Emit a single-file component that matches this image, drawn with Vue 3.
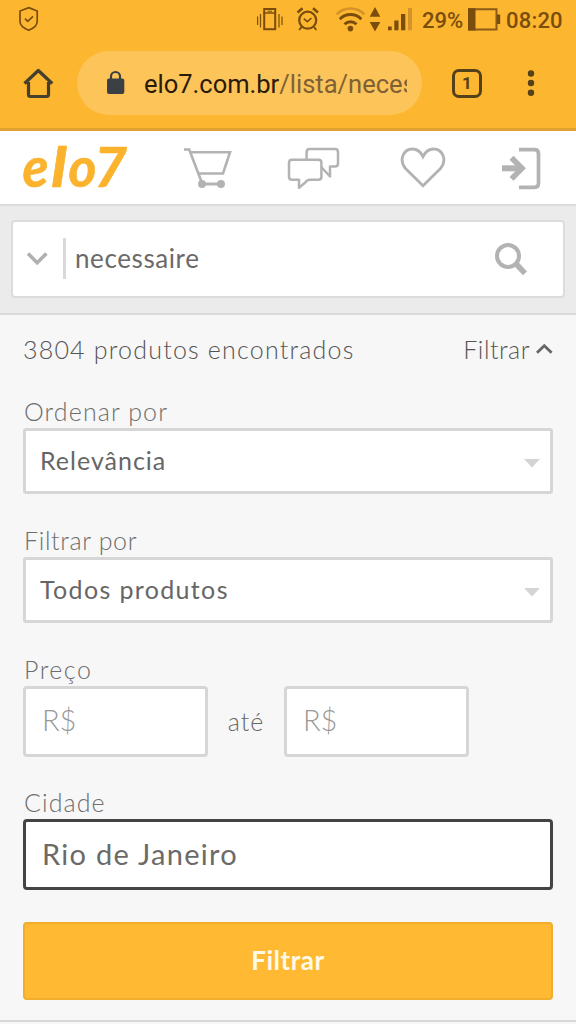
<script setup>
import { ref } from 'vue'

const query = ref('necessaire')
const city = ref('Rio de Janeiro')
const selects = [
  { label: 'Ordenar por', value: 'Relevância', cls: 'v-rel', lcls: 'l-ord' },
  { label: 'Filtrar por', value: 'Todos produtos', cls: 'v-tod', lcls: 'l-fil' },
]
</script>

<template>
  <div class="screen">
    <div class="status">
      <svg class="shield" width="22" height="28" viewBox="18 5 22 28" fill="none" stroke="#7a4d0c" stroke-width="1.7">
        <path d="M28.7 7.6L37.2 11v10.5c0 4-4 7-8.5 8.8c-4.500-1.800-8.700-4.800-8.700-8.800V11z" />
        <path d="M25 18.600l2.700 2.700l5.300-5" />
      </svg>
      <svg class="vibrate" width="28" height="28" viewBox="256 6 28 28" fill="none" stroke="#7a4d0c">
        <rect x="264.200" y="9" width="11" height="20.200" stroke-width="2" />
        <path d="M263.500 13h12.500" stroke-width="1.500" />
        <path d="M267.500 11.200h4.500" stroke-width="1" />
        <path d="M260.500 14v13.500M279 14v13.500M257.600 16.500v8.500M282 16.500v8.500" stroke-width="1.200" />
      </svg>
      <svg class="alarm" width="26" height="28" viewBox="295 6 26 28" fill="none" stroke="#7a4d0c">
        <circle cx="307.700" cy="20.200" r="8.500" stroke-width="2.200" />
        <path d="M297.500 12.500l5-4.300M318 12.500l-5-4.300" stroke-width="2.600" />
        <path d="M301.500 27l-2.300 3M314 27l2.300 3" stroke-width="2" />
        <path d="M303.800 18.600l3.500 3l4.200-3.600" stroke-width="1.600" />
      </svg>
      <svg class="wifi" width="32" height="28" viewBox="335 6 32 28" fill="none">
        <path d="M336.500 14.500c7.500-8 20.500-8 28 0" stroke="#d4922a" stroke-width="2.500" />
        <g stroke="#7a4d0c" stroke-width="2.900">
          <path d="M339.800 19.200c6-6.200 15.500-6.200 21.500 0" />
          <path d="M344.500 24.300c3.500-3.500 8.500-3.500 12 0" />
        </g>
        <circle cx="350.400" cy="28.600" r="2.800" fill="#7a4d0c" />
      </svg>
      <svg class="traffic" width="12" height="28" viewBox="369 6 12 28" fill="#7a4d0c">
        <path d="M375 7l5.300 9.800h-10.600zM375 31.500l5.300-9.500h-10.600z" />
      </svg>
      <svg class="signal" width="26" height="28" viewBox="387 6 26 28" fill="#7a4d0c">
        <path d="M388 26.500h3.700v3.700H388zM394.300 20.500h4.200v9.700h-4.200zM401 14h4.300v16.200H401z" />
        <path d="M408 8h4v22.200h-4z" fill="#d4922a" />
      </svg>
      <span class="pct">29%</span>
      <svg class="battery" width="34" height="28" viewBox="467 6 34 28">
        <path d="M469 9.200h27.500v20.200H469z" fill="none" stroke="#8a5c17" stroke-width="2" />
        <path d="M468 8.200h7.500v22.200H468zM497 14.500h3.200v9.500H497z" fill="#7a4d0c" />
      </svg>
      <span class="clock">08:20</span>
    </div>

    <div class="browser">
      <svg class="home" width="32" height="34" viewBox="22 67 32 34" fill="none" stroke="#45402e" stroke-width="3.200" stroke-linejoin="round">
        <path d="M24.500 83.500L38.300 70.500L52.200 83.500M28.500 82v12.500q0 2 2 2h16q2 0 2-2V82" />
      </svg>
      <div class="url">
        <svg class="lock" width="20" height="26" viewBox="106 70 20 26">
          <path d="M111 80v-3.500a4.500 4.500 0 0 1 9 0V80" fill="none" stroke="#3b4044" stroke-width="2.200" />
          <rect x="107" y="78.600" width="17.300" height="15.400" rx="2" fill="#3b4044" />
        </svg>
        <div class="address"><b>elo7.com.br</b>/lista/neces</div>
      </div>
      <div class="tabs"><span>1</span></div>
      <svg class="dots" width="10" height="30" viewBox="526 68 10 30" fill="#54401a">
        <circle cx="531" cy="73.500" r="3.200" /><circle cx="531" cy="83" r="3.200" /><circle cx="531" cy="92.700" r="3.200" />
      </svg>
    </div>

    <header class="site">
      <svg class="logo" width="108" height="70" viewBox="21 133 108 70">
        <g class="logo-text">
          <text x="22.500" y="187" textLength="26" lengthAdjust="spacingAndGlyphs">e</text>
          <text x="51" y="187" textLength="16" lengthAdjust="spacingAndGlyphs">l</text>
          <text x="68.500" y="187" textLength="28" lengthAdjust="spacingAndGlyphs">o</text>
          <text x="94" y="187" textLength="33" lengthAdjust="spacingAndGlyphs">7</text>
        </g>
      </svg>
      <svg class="cart" width="50" height="44" viewBox="183 145 50 44" fill="none" stroke="#b3b3b3" stroke-width="2.600">
        <path d="M184 148.500h5.200L202 182M190.500 151.200h39.500l-7 21.300h-24" />
        <path d="M202 183h19" stroke-width="3" />
        <circle cx="202" cy="183" r="4" fill="#b3b3b3" stroke="none" /><circle cx="221" cy="183" r="4" fill="#b3b3b3" stroke="none" />
      </svg>
      <svg class="chat" width="54" height="44" viewBox="287 145 54 44" fill="none" stroke="#b3b3b3" stroke-width="2.500" stroke-linejoin="round">
        <path d="M306.600 158.500v-7.500q0-3 3-3h25.400q3 0 3 3v11.500q0 3-3 3h-5v10l-8.700-9.500" />
        <path d="M292 158.700h26.400q3 0 3 3v14q0 3-3 3h-8.400q-3 0-5 3l-6 5v-8h-7q-3 0-3-3v-14q0-3 3-3z" />
      </svg>
      <svg class="heart" width="48" height="44" viewBox="399 145 48 44" fill="none" stroke="#b3b3b3" stroke-width="2.800">
        <path d="M423 184.800L405.500 167.500C398.500 159 403.500 148 412.500 148C417.500 148 421 151.500 423 155.500C425 151.500 428.500 148 433.500 148C442.500 148 447.500 159 440.500 167.500z" />
      </svg>
      <svg class="login" width="42" height="44" viewBox="501 145 42 44" fill="none" stroke="#b3b3b3">
        <path d="M519 148.700h15.500q4 0 4 4v29.600q0 4-4 4H519" stroke-width="3.700" />
        <path d="M502 167.300h20" stroke-width="6" />
        <path d="M511.500 156.700l10.500 10.600l-10.500 10.600" stroke-width="5.600" />
      </svg>
    </header>

    <section class="search">
      <div class="searchbox">
        <svg class="chev" width="24" height="16" viewBox="25 251 24 16" fill="none" stroke="#b0b0b0" stroke-width="3.600">
          <path d="M28 253.500l9.200 9.200l9.200-9.200" />
        </svg>
        <i class="bar"></i>
        <span class="query">{{ query }}</span>
        <svg class="lens" width="36" height="36" viewBox="493 241 36 36" fill="none" stroke="#b3b3b3">
          <circle cx="508" cy="256" r="11" stroke-width="4" />
          <path d="M516.200 264l8.800 9.300" stroke-width="5.600" />
        </svg>
      </div>
    </section>

    <main>
      <div class="summary">
        <span class="count">3804 produtos encontrados</span>
        <span class="toggle"><span>Filtrar</span>
          <svg width="18" height="12" viewBox="536 343 18 12" fill="none" stroke="#666" stroke-width="2.800"><path d="M538 352.800l7.300-7l7.300 7" /></svg>
        </span>
      </div>

      <template v-for="s in selects" :key="s.label">
        <div class="label"><span :class="s.lcls">{{ s.label }}</span></div>
        <div class="select">
          <span :class="s.cls">{{ s.value }}</span>
          <svg width="16" height="9" viewBox="0 0 16 9"><path d="M0 0h16L8 8.500z" fill="#d4d4d4" /></svg>
        </div>
      </template>

      <div class="label"><span class="l-pre">Preço</span></div>
      <div class="prices">
        <div class="input price"><span class="ph">R$</span></div>
        <span class="ate">até</span>
        <div class="input price"><span class="ph">R$</span></div>
      </div>

      <div class="label l-city"><span>Cidade</span></div>
      <div class="input focus"><span class="city">{{ city }}</span></div>

      <button class="submit"><span>Filtrar</span></button>
    </main>
    <div class="foot"></div>
  </div>
</template>

<style>
html, body { margin: 0; background: #f7f7f7; overflow: hidden; }
</style>

<style scoped>
* { box-sizing: border-box; }
.screen { width: 576px; height: 1024px; overflow: hidden; background: #f7f7f7; font-family: Lato, "Noto Sans", sans-serif; color: #737373; display: flex; flex-direction: column; }
svg { display: block; flex: none; }
span { white-space: nowrap; }
.status { height: 40px; flex: none; background: #fcb62f; display: flex; align-items: center; font-family: Roboto, sans-serif; font-weight: 500; font-size: 22px; color: #7a4d0c; }
.shield { margin-left: 18px; margin-top: -2px; }
.vibrate { margin-left: 216px; }
.alarm { margin-left: 11px; }
.wifi { margin-left: 14px; }
.traffic { margin-left: 2px; }
.signal { margin-left: 6px; }
.pct { margin-left: 9px; width: 45px; }
.clock { margin-left: 5px; letter-spacing: .2px; }
.browser { height: 91px; flex: none; background: #fcb62f; border-bottom: 3px solid #e2a232; display: flex; align-items: center; }
.home { margin-left: 22px; }
.url { margin-left: 23px; margin-top: -2px; width: 345px; height: 64px; border-radius: 32px; background: #fdc45a; display: flex; align-items: center; }
.lock { margin-left: 29px; }
.address { margin-left: 18px; width: 263px; overflow: hidden; white-space: nowrap; font-family: Roboto, sans-serif; font-size: 25.5px; line-height: 36px; color: #806035; padding-top: 2px; }
.address b { font-weight: 400; color: #2a1a08; }
.tabs { margin-left: 30px; margin-top: -2px; width: 30px; height: 29px; border: 3px solid #54401a; border-radius: 7px; font: 700 17px/23px Roboto, sans-serif; color: #54401a; text-align: center; }
.dots { margin-left: 44px; margin-top: -2px; }
.site { height: 75px; flex: none; background: #fff; border-bottom: 2px solid #dcdcdc; display: flex; align-items: center; }
.logo { margin-left: 21px; overflow: visible; }
.logo-text { font-family: Lato, sans-serif; font-weight: 700; font-style: italic; font-size: 55px; fill: #fbb32e; stroke: #fbb32e; stroke-width: .6px; }
.cart { margin-left: 54px; }
.chat { margin-left: 54px; }
.heart { margin-left: 58px; }
.login { margin-left: 54px; }
.search { height: 109px; flex: none; background: #ebebeb; border-bottom: 2px solid #dadada; padding: 14px 11px 0; }
.searchbox { height: 78px; background: #fff; border: 2px solid #dcdcdc; border-radius: 4px; display: flex; align-items: center; }
.chev { margin-left: 12px; }
.bar { width: 3px; height: 41px; background: #d9d9d9; margin-left: 14px; margin-top: -1px; flex: none; }
.query { margin-left: 9px; width: 300px; font-size: 26px; line-height: 34px; margin-top: -3px; letter-spacing: .6px; color: #6c6a68; }
.lens { margin-left: 118px; }
main { flex: none; padding: 0 23px; display: flex; flex-direction: column; }
.summary { height: 79px; display: flex; justify-content: space-between; padding-top: 16px; font-size: 25px; font-weight: 300; line-height: 36px; color: #555; }
.count { letter-spacing: 1.2px; }
.toggle { display: flex; height: 36px; align-items: center; gap: 5px; letter-spacing: .5px; }
.label { height: 34px; line-height: 34px; font-size: 25px; font-weight: 300; color: #6e6e6e; flex: none; letter-spacing: 1.1px; padding-left: 1px; }
.l-fil { letter-spacing: .65px; }
.l-pre { letter-spacing: 1.5px; }
.select { height: 66px; flex: none; border: 3px solid #d6d6d6; border-radius: 3px; background: #fff; display: flex; align-items: center; justify-content: space-between; padding: 0 10px 0 14px; margin-bottom: 29px; font-size: 25px; letter-spacing: 1px; color: #666; }
.select span { margin-top: -3px; }
.select .v-tod { letter-spacing: 1.35px; }
.select svg { margin-top: 4px; }
.prices { display: flex; align-items: center; }
.input { height: 71px; flex: none; border: 3px solid #d6d6d6; border-radius: 4px; background: #fff; display: flex; align-items: center; padding-left: 16px; font-size: 29px; }
.price { width: 185px; }
.ph { font-weight: 300; color: #999; margin-top: -4px; }
.ate { width: 76px; text-align: center; font-size: 25px; font-weight: 300; color: #666; letter-spacing: 1px; margin-top: -2px; }
.l-city { margin-top: 28px; }
.focus { border-color: #444; }
.city { color: #6c6a68; letter-spacing: 1.3px; margin-top: -2px; }
.submit { margin: 32px 0 0; padding: 0 0 2px; height: 78px; flex: none; border: 2px solid #f0ae2c; border-radius: 4px; background: #ffb932; color: #fff9e8; font: 700 26px Lato, sans-serif; letter-spacing: .5px; }
.foot { margin-top: 20px; height: 2px; background: #d8d8d8; flex: none; }
</style>
